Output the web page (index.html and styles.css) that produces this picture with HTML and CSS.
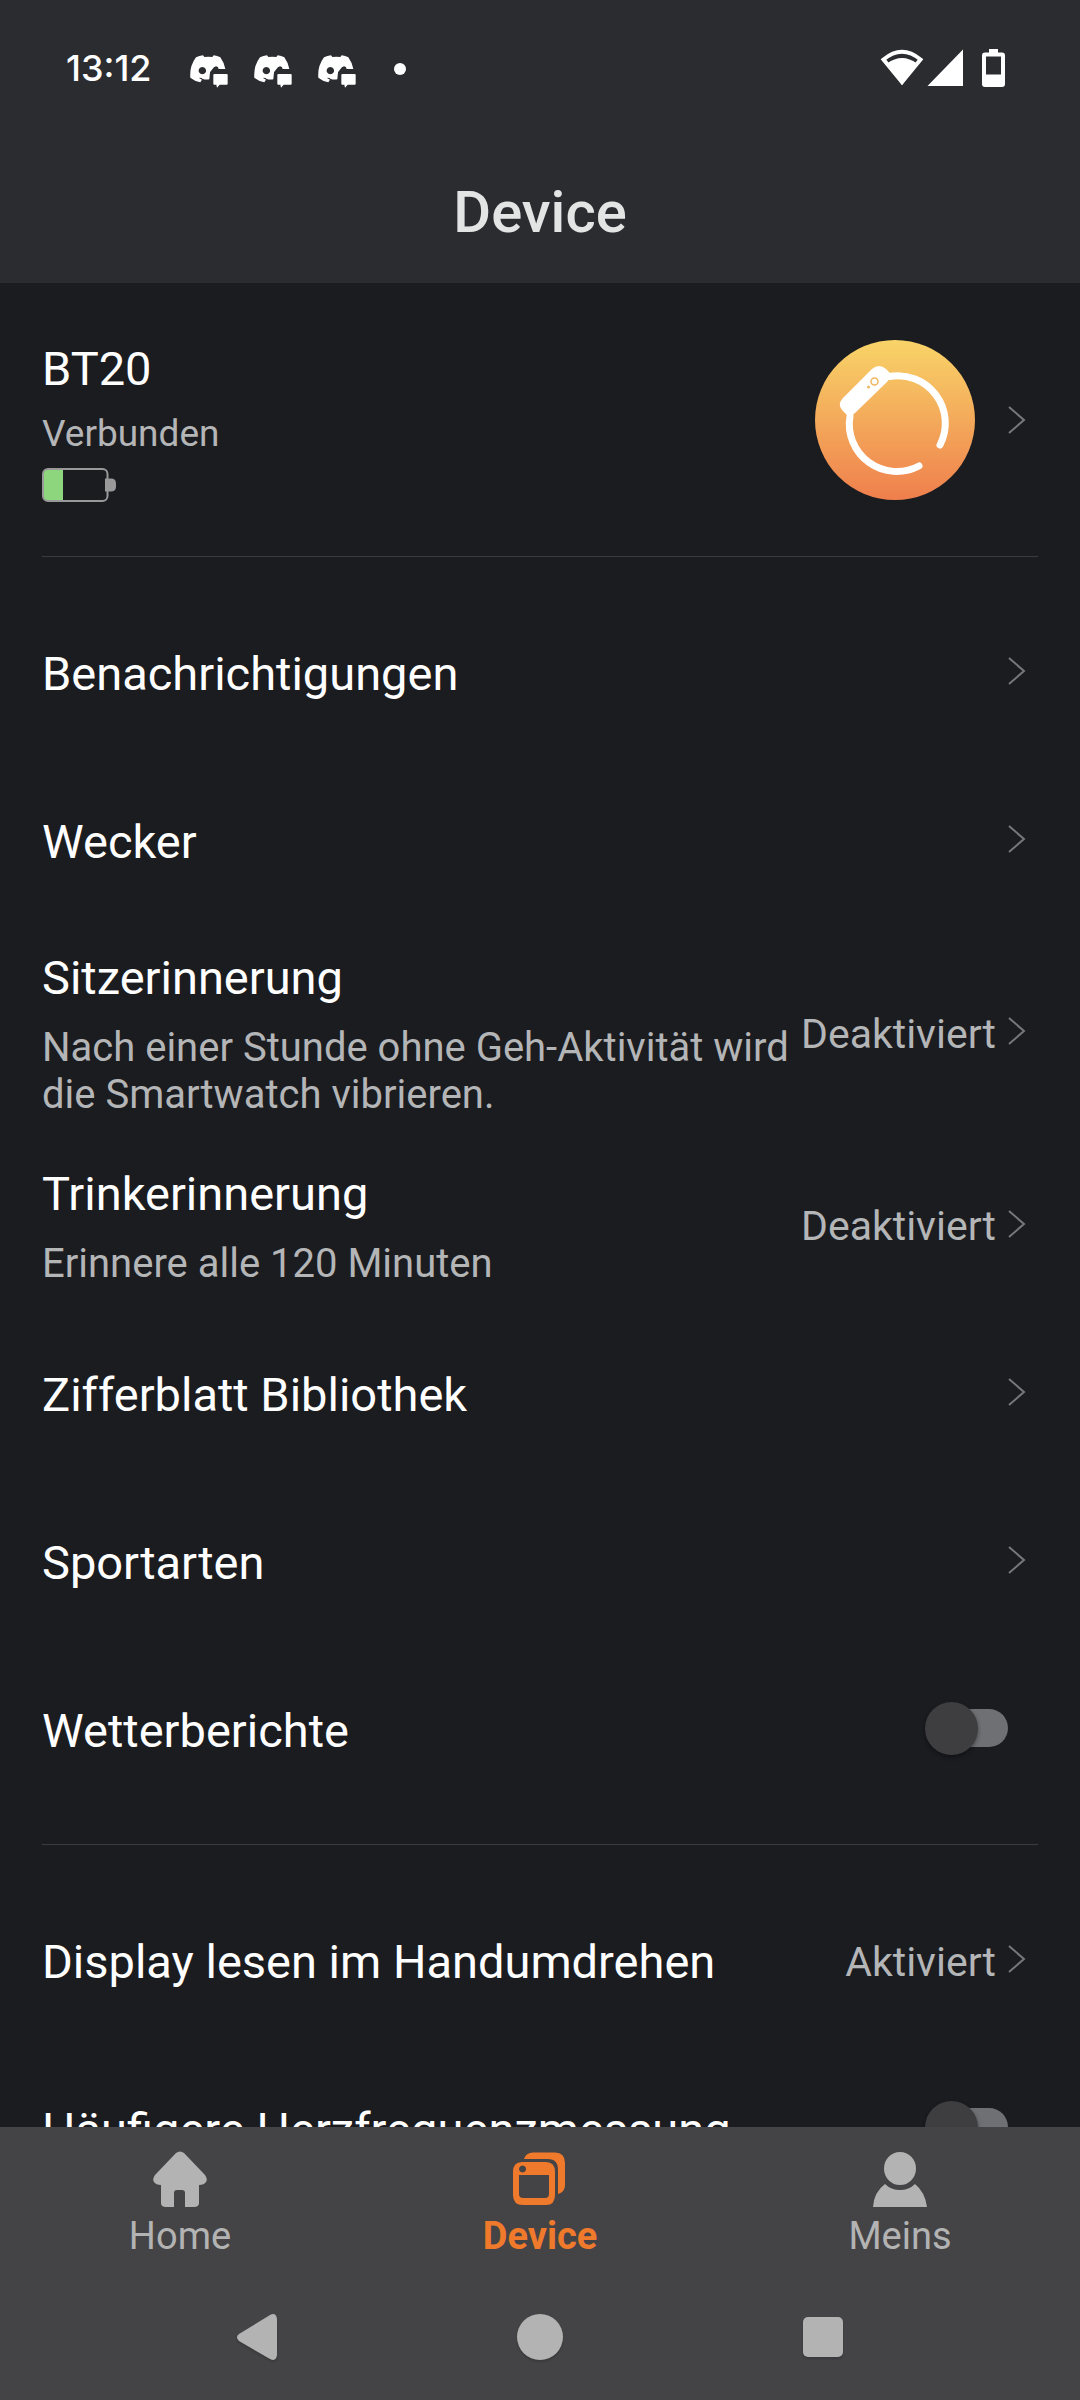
FILE: index.html
```html
<!DOCTYPE html>
<html lang="de">
<head>
<meta charset="utf-8">
<meta name="viewport" content="width=device-width, initial-scale=1">
<title>Device</title>
<link rel="stylesheet" href="styles.css">
</head>
<body>
<svg class="sprite" aria-hidden="true">
  <symbol id="chevron" viewBox="0 0 18 28"><path d="M1 1 16 14 1 27" fill="none" stroke="currentColor" stroke-width="2"/></symbol>
  <symbol id="chat" viewBox="0 0 114 99">
    <path fill-rule="evenodd" d="M18 7Q28 3 39 1L43 6Q55 4 67 6L71 1Q82 3 91 7Q103 24 106 42H86Q85 34 78 34Q71 36 67 43Q64 46 60 52L58 73Q46 75 37 71L35 69L26 68L36 74L31 82Q13 78 1 68Q-2 34 18 7ZM37 36a11 11 0 1 0 .1 0Z"/>
    <path d="M73 57H110Q113 57 113 60V86Q113 89 110 89H89L81 98L79 89H73Q70 89 70 86V60Q70 57 73 57Z"/>
  </symbol>
</svg>
<div class="app">
  <header class="header">
    <div class="status">
      <time class="clock">13:12</time>
      <div class="notices">
        <svg class="notice"><use href="#chat"/></svg>
        <svg class="notice"><use href="#chat"/></svg>
        <svg class="notice"><use href="#chat"/></svg>
        <span class="more"></span>
      </div>
      <svg class="signals" viewBox="0 -1 126 40" role="img" aria-label="WLAN, Mobilfunk, Akku">
        <path d="M3.500 10.500Q22 -5 40.500 10.500L22 33Z" fill="none" stroke="#fff" stroke-width="4"/>
        <path d="M7 14.500Q22 3.500 37 14.500L22 36Z"/>
        <path d="M47.500 37 83 0.500V37Z"/>
        <path fill-rule="evenodd" d="M109 0H118V3.500H122Q125 3.500 125 6.500V35Q125 38 122 38H105Q102 38 102 35V6.500Q102 3.500 105 3.500H109ZM106 7.500V25.500H121V7.500Z"/>
      </svg>
    </div>
    <h1 class="title">Device</h1>
  </header>

  <main class="content">
    <a class="device" href="#device">
      <span class="device-info">
        <span class="name">BT20</span>
        <span class="state">Verbunden</span>
        <svg class="battery" viewBox="0 0 74 34" role="img" aria-label="Akkustand niedrig">
          <path d="M5 1.500H21V32.500H5Q1.500 32.500 1.500 29V5Q1.500 1.500 5 1.500Z" fill="#8dd67e"/>
          <rect x="1" y="1" width="64.500" height="32" rx="5" fill="none" stroke="#999" stroke-width="2"/>
          <path d="M63 10.500H69Q74 10.500 74 15.500V18.500Q74 23.500 69 23.500H63Z" fill="#999"/>
        </svg>
      </span>
      <svg class="watch" viewBox="0 0 160 160" aria-hidden="true">
        <defs><linearGradient id="sun" x2="0" y2="1"><stop stop-color="#f8d468"/><stop offset="1" stop-color="#ef7f4d"/></linearGradient></defs>
        <circle cx="80" cy="80" r="80" fill="url(#sun)"/>
        <path d="M74 36.500A47.500 47.500 0 0 1 125 105M104 126A47.500 47.500 0 0 1 35 76" fill="none" stroke="#fff" stroke-width="7" stroke-linecap="round"/>
        <path d="M57 29Q64 23 71 29L76 34Q75 39 72 42L40 73Q37 76 32 75L27 70Q22 64 28 58Z" fill="#fff"/>
        <circle cx="59.500" cy="41.500" r="3.500" fill="#fff" stroke="#efb75f" stroke-width="1.500"/>
        <circle cx="53.500" cy="47" r="1.500" fill="#efb75f"/>
      </svg>
      <svg class="chevron"><use href="#chevron"/></svg>
    </a>

    <section class="group">
      <a class="row" href="#notifications"><span class="name">Benachrichtigungen</span><svg class="chevron"><use href="#chevron"/></svg></a>
      <a class="row" href="#alarm"><span class="name">Wecker</span><svg class="chevron"><use href="#chevron"/></svg></a>
      <a class="row" href="#sedentary">
        <span class="text"><span class="name">Sitzerinnerung</span><span class="hint">Nach einer Stunde ohne Geh-Aktivität wird die Smartwatch vibrieren.</span></span>
        <span class="value">Deaktiviert</span><svg class="chevron"><use href="#chevron"/></svg>
      </a>
      <a class="row" href="#drink">
        <span class="text"><span class="name">Trinkerinnerung</span><span class="hint">Erinnere alle 120 Minuten</span></span>
        <span class="value">Deaktiviert</span><svg class="chevron"><use href="#chevron"/></svg>
      </a>
      <a class="row" href="#faces"><span class="name">Zifferblatt Bibliothek</span><svg class="chevron"><use href="#chevron"/></svg></a>
      <a class="row" href="#sports"><span class="name">Sportarten</span><svg class="chevron"><use href="#chevron"/></svg></a>
      <label class="row" for="weather"><span class="name">Wetterberichte</span><input class="switch" type="checkbox" role="switch" id="weather"></label>
    </section>

    <section class="group">
      <a class="row" href="#display"><span class="name">Display lesen im Handumdrehen</span><span class="value">Aktiviert</span><svg class="chevron"><use href="#chevron"/></svg></a>
      <label class="row" for="heart"><span class="name">Häufigere Herzfrequenzmessung</span><input class="switch" type="checkbox" role="switch" id="heart"></label>
    </section>
  </main>

  <footer class="footer">
    <nav class="tabs">
      <a class="tab" href="#home">
        <svg class="tab-icon" viewBox="0 0 56 56"><path d="M24 2Q28-1 32 2L53 24Q56 28 54 31Q52 34 47 34V52Q47 56 42 56H33V42Q33 39 30 39H25Q22 39 22 42V56H14Q9 56 9 52V34Q4 34 2 31Q0 28 3 24Z"/></svg>
        <span>Home</span>
      </a>
      <a class="tab active" href="#device" aria-current="page">
        <svg class="tab-icon" viewBox="0 0 56 56">
          <path fill-rule="evenodd" d="M10 11H34Q43 11 43 21V44Q43 54 34 54H11Q1 54 1 44V21Q1 11 10 11ZM7 24V43Q7 47 11 47H33Q37 47 37 43V24ZM10.500 14.500a3.500 3.500 0 1 0 .1 0Z"/>
          <path d="M12 8Q14 1.500 21 1.500H43Q53 1.500 53 12V34Q53 41 46 43V19Q46 8 36 8Z"/>
        </svg>
        <span>Device</span>
      </a>
      <a class="tab" href="#me">
        <svg class="tab-icon" viewBox="0 0 56 56"><ellipse cx="28" cy="17.500" rx="16" ry="16.500"/><path d="M1 56Q2 41 13 33Q19 39 28 39Q37 39 43 33Q53 41 55 56Z"/></svg>
        <span>Meins</span>
      </a>
    </nav>
    <div class="system">
      <button class="key" aria-label="Zurück"><svg viewBox="0 0 48 48"><path d="M37 2Q43-1 44 6V42Q43 49 37 46L6 28Q2 24 6 21Z"/></svg></button>
      <button class="key" aria-label="Startbildschirm"><svg viewBox="0 0 48 48"><circle cx="24" cy="24" r="23"/></svg></button>
      <button class="key" aria-label="Übersicht"><svg viewBox="0 0 48 48"><rect x="4" y="4" width="40" height="40" rx="5"/></svg></button>
    </div>
  </footer>
</div>
</body>
</html>
```
FILE: styles.css
```css
* { box-sizing: border-box; }
body {
  margin: 0;
  background: #1b1c20;
  color: #fff;
  font-family: Roboto, "Liberation Sans", sans-serif;
}
a { color: inherit; text-decoration: none; }
svg { display: block; flex: none; fill: currentColor; }
.sprite { position: absolute; width: 0; height: 0; }

.app { display: flex; flex-direction: column; height: 100vh; }

/* Header */
.header { flex: none; background: #2b2c30; }
.status {
  display: flex;
  align-items: center;
  height: 136px;
  padding: 0 74px 0 66px;
}
.clock { font: 500 36px/44px Inter, sans-serif; }
.notices { display: flex; align-items: center; gap: 26px; margin: 6px auto 0 38px; }
.notice { width: 38px; height: 33px; }
.more { width: 12px; height: 12px; margin: 0 0 4px 12px; border-radius: 50%; background: #fff; }
.signals { width: 126px; height: 40px; }
.title {
  margin: 0;
  padding: 42px 0 37px;
  color: #e3e5e4;
  font-size: 58px;
  font-weight: 500;
  line-height: 68px;
  text-align: center;
}

/* Settings list */
.content { flex: 1; min-height: 0; padding: 0 42px; overflow: auto; scrollbar-width: none; }
.device {
  display: flex;
  align-items: center;
  padding: 55px 12px 54px 0;
  border-bottom: 1px solid #3a3b3d;
}
.device-info { display: flex; flex-direction: column; flex: 1; padding-top: 4px; }
.name { font-size: 47px; line-height: 54px; }
.state { margin: 16px 0 12px; color: #b4b5b7; font-size: 37px; line-height: 44px; }
.battery { width: 74px; height: 34px; }
.watch { width: 160px; height: 160px; margin-right: 33px; }
.chevron { width: 18px; height: 28px; color: #77787b; }

.group { padding: 30px 0 32px; }
.group + .group { border-top: 1px solid #3a3b3d; }
.row { display: flex; align-items: center; min-height: 168px; padding-right: 12px; }
.row > .name { flex: 1; padding-top: 6px; }
.text { display: flex; flex-direction: column; flex: 1; gap: 19px; padding: 28px 0 21px; }
.hint, .value { color: #b4b5b7; line-height: 47px; }
.hint { font-size: 40px; }
.value { margin-right: 12px; padding-top: 6px; font-size: 41px; }

.switch {
  appearance: none;
  display: flex;
  align-items: center;
  width: 77px;
  height: 38px;
  margin: 0 18px 0 0;
  border-radius: 19px;
  background: #6f7073;
}
.switch::before {
  content: "";
  flex: none;
  width: 53px;
  height: 53px;
  margin-left: -6px;
  border-radius: 50%;
  background: #3e3e40;
  box-shadow: 0 2px 4px rgba(0, 0, 0, .4);
}
.switch:checked { justify-content: flex-end; background: #f07a2c; }

/* Bottom bars */
.footer { flex: none; background: #444446; color: #b3b3b3; }
.tabs { display: grid; grid-template-columns: repeat(3, 1fr); padding-top: 24px; }
.tab {
  display: flex;
  flex-direction: column;
  align-items: center;
  gap: 6px;
  font-size: 38px;
  line-height: 46px;
}
.active { color: #f07a2c; font-weight: 700; }
.tab-icon { width: 56px; height: 56px; }
.system { display: flex; justify-content: center; gap: 235px; padding: 54px 0 39px; }
.key { padding: 0; border: 0; background: none; color: inherit; }
.key svg { width: 48px; height: 48px; filter: drop-shadow(0 2px 1px rgba(0, 0, 0, .15)); }
```
